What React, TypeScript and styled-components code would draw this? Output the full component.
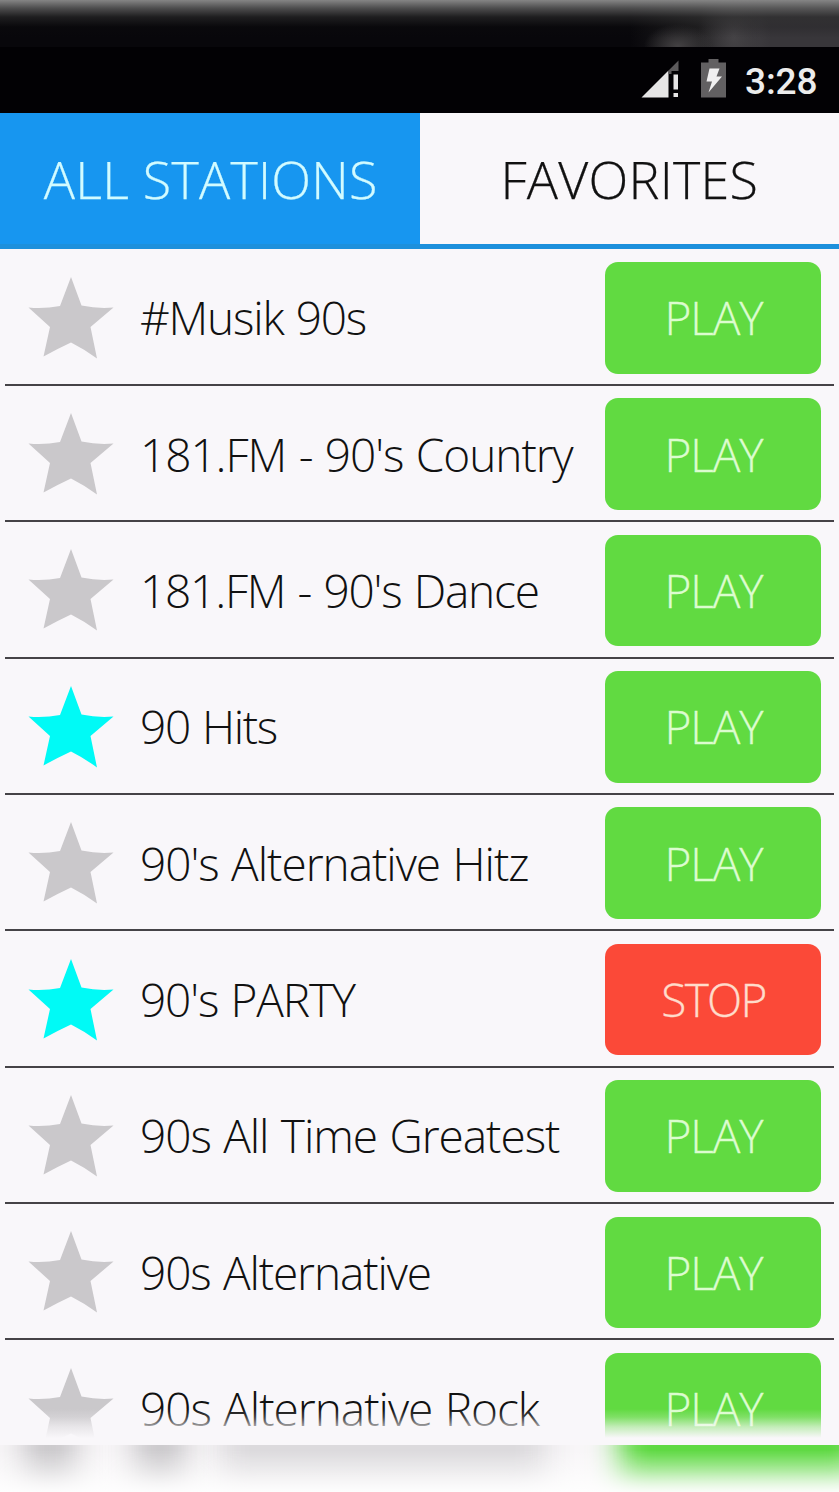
import React from "react";
import styled, { createGlobalStyle } from "styled-components";

const GlobalStyle = createGlobalStyle`
  * { box-sizing: border-box; }
  body { margin: 0; background: #f9f7fa; overflow: hidden; }
`;

const Screen = styled.main`
  width: 839px;
  height: 1492px;
  display: flex;
  flex-direction: column;
  overflow: hidden;
  background: #f9f7fa;
  font-family: "Open Sans", sans-serif;
  font-weight: 300;
  color: #111;
`;

const TopHaze = styled.div`
  flex: 0 0 47px;
  background:
    linear-gradient(180deg, #858585 0, rgba(96, 96, 96, 0.8) 8px, rgba(45, 45, 45, 0.6) 17px, rgba(15, 15, 15, 0.2) 27px, transparent 38px),
    radial-gradient(ellipse 34px 22px at 678px 46px, #434143, transparent),
    radial-gradient(ellipse 36px 60px at 734px 36px, #454346, transparent),
    linear-gradient(90deg, #08070b 0, #08070b 630px, #222123 700px, #38363a 760px, #38363a 839px);
`;

const StatusBar = styled.div`
  flex: 0 0 66px;
  display: flex;
  align-items: flex-start;
  padding-left: 641px;
  background: #020104;
`;

const SignalIcon = styled.svg`
  flex: none;
  width: 39px;
  height: 38px;
  margin-top: 13px;
`;

const BatteryIcon = styled.svg`
  flex: none;
  width: 26px;
  height: 40px;
  margin: 11px 0 0 21px;
`;

const Clock = styled.span`
  margin: 13px 0 0 18px;
  font: 500 37px/44px Roboto, sans-serif;
  letter-spacing: -0.1px;
  color: #ececec;
  white-space: nowrap;
`;

const Tabs = styled.nav`
  flex: 0 0 136px;
  display: flex;
  border-bottom: 5px solid #1d90dc;
  background: #1796f0;
`;

const Tab = styled.button<{ $active?: boolean }>`
  flex: 0 0 50%;
  padding: 0 0 0 ${(p) => (p.$active ? 2 : 0)}px;
  border: 0;
  background: ${(p) => (p.$active ? "#1796f0" : "#f9f7fa")};
  color: ${(p) => (p.$active ? "#d2fbff" : "#111")};
  font: inherit;
  font-size: 52px;
  line-height: 131px;
  letter-spacing: 0.25px;
  -webkit-text-stroke: 0.25px currentColor;
  white-space: nowrap;
`;

const List = styled.ul`
  position: relative;
  flex: 0 0 1196px;
  margin: 0;
  padding: 0.6px 5px 0;
  overflow: hidden;
  list-style: none;
`;

const Row = styled.li`
  height: 136.36px;
  display: flex;
  align-items: center;
  border-bottom: 2px solid #454347;
`;

const StarIcon = styled.svg<{ $on?: boolean }>`
  flex: none;
  width: 86px;
  height: 82px;
  margin: 2px 26px 0 23px;
  fill: ${(p) => (p.$on ? "#00faf6" : "#cac8cb")};
`;

const Name = styled.span<{ $spacing: number }>`
  flex: 1;
  padding-top: 1px;
  font-size: 46px;
  line-height: 62px;
  letter-spacing: ${(p) => p.$spacing}px;
  word-spacing: 1.5px;
  white-space: nowrap;
`;

const ActionButton = styled.button<{ $stop?: boolean }>`
  flex: none;
  width: 216px;
  height: 111.5px;
  margin: 2px 13px 0 0;
  padding: 0 0 0 1px;
  border: 0;
  border-radius: 13px;
  background: ${(p) => (p.$stop ? "#fb4938" : "#61da41")};
  color: ${(p) => (p.$stop ? "#ffdccb" : "#dcfccf")};
  font: inherit;
  font-size: 46px;
  line-height: 111px;
  letter-spacing: ${(p) => (p.$stop ? -1.7 : -1.1)}px;
  -webkit-text-stroke: 0.3px currentColor;
`;

const ListFade = styled.div`
  position: absolute;
  left: 0;
  right: 0;
  bottom: 0;
  height: 36px;
  background: linear-gradient(180deg, rgba(249, 247, 250, 0) 0, rgba(249, 247, 250, 0.2) 8px, rgba(249, 247, 250, 0.65) 18px, #f9f7fa 29px);
`;

const BottomHaze = styled.div`
  position: relative;
  flex: 0 0 47px;
  overflow: hidden;
  background: #f8f6f8;
`;

const Smudge = styled.i<{ $x: number; $w: number; $tone: string }>`
  position: absolute;
  left: ${(p) => p.$x}px;
  top: -50px;
  width: ${(p) => p.$w}px;
  height: 92px;
  background: ${(p) => p.$tone};
  filter: blur(15px);
`;

const BottomVeil = styled.div`
  position: absolute;
  inset: 0;
  background: linear-gradient(180deg, rgba(255, 255, 255, 0) 5px, rgba(255, 255, 255, 0.45) 27px, rgba(255, 255, 255, 0.9) 47px);
`;

interface Station {
  name: string;
  spacing: number;
  favorite?: boolean;
  playing?: boolean;
}

const stations: Station[] = [
  { name: "#Musik 90s", spacing: -1.2 },
  { name: "181.FM - 90's Country", spacing: -1.05 },
  { name: "181.FM - 90's Dance", spacing: -1.2 },
  { name: "90 Hits", spacing: -1.35, favorite: true },
  { name: "90's Alternative Hitz", spacing: -1.03 },
  { name: "90's PARTY", spacing: -1.15, favorite: true, playing: true },
  { name: "90s All Time Greatest", spacing: -1.05 },
  { name: "90s Alternative", spacing: -1.12 },
  { name: "90s Alternative Rock", spacing: -1.03 },
];

export default function App() {
  return (
    <Screen>
      <GlobalStyle />
      <TopHaze />
      <StatusBar>
        <SignalIcon viewBox="0 0 39 38">
          <path d="M0.500 37.500 27.500 10.500V37.500Z" fill="#e6e5e6" />
          <path d="M27.500 10.500 37.500 0.500V11H30.500V14H27.500Z" fill="#5c5a5c" />
          <path d="M32.500 14.500h4.500v15h-4.500zM32.500 33h4.500v4h-4.500z" fill="#e6e5e6" />
        </SignalIcon>
        <BatteryIcon viewBox="0 0 26 40">
          <path d="M0 4.500H7.500V1H17.500V4.500H25V39.500H0Z" fill="#626062" />
          <path d="M8.500 10.500H18.500L15.500 18.500H21L7.500 34.500 11 23.500H5.500Z" fill="#f0eff0" />
        </BatteryIcon>
        <Clock>3:28</Clock>
      </StatusBar>
      <Tabs>
        <Tab $active>ALL STATIONS</Tab>
        <Tab>FAVORITES</Tab>
      </Tabs>
      <List>
        {stations.map((s) => (
          <Row key={s.name}>
            <StarIcon $on={s.favorite} viewBox="0 0 86 82">
              <path d="M43 0 53.500 28.500Q70 32 85.500 30.500L62.500 50 69 81.500Q56 72 43 65.500 29 72 15.500 79.500L22 50 0.500 30.500Q16 32 32 29Z" />
            </StarIcon>
            <Name $spacing={s.spacing}>{s.name}</Name>
            <ActionButton $stop={s.playing}>{s.playing ? "STOP" : "PLAY"}</ActionButton>
          </Row>
        ))}
        <ListFade />
      </List>
      <BottomHaze>
        <Smudge $x={24} $w={52} $tone="#c9c7ca" />
        <Smudge $x={135} $w={50} $tone="#c9c7ca" />
        <Smudge $x={220} $w={325} $tone="#dcdadd" />
        <Smudge $x={620} $w={240} $tone="#5fd943" />
        <BottomVeil />
      </BottomHaze>
    </Screen>
  );
}
